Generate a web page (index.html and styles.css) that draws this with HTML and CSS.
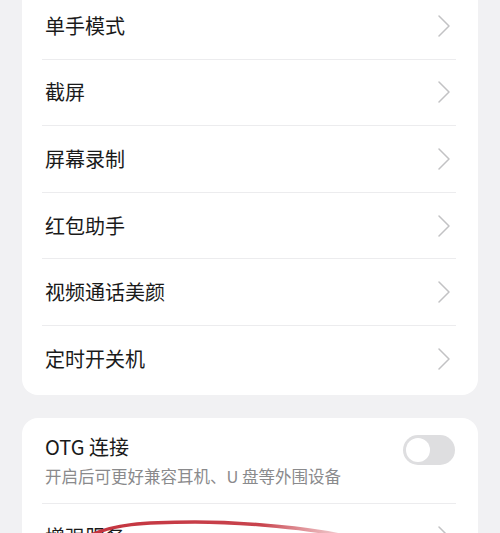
FILE: index.html
```html
<!DOCTYPE html>
<html lang="zh">
<head>
<meta charset="utf-8">
<link rel="stylesheet" href="styles.css">
</head>
<body>
<div class="page">
  <div class="card card-top">
    <div class="row"><span class="label">单手模式</span><svg class="chev" viewBox="0 0 14 22"><path d="M2 1 L12 11 L2 21"/></svg></div>
    <div class="row"><span class="label">截屏</span><svg class="chev" viewBox="0 0 14 22"><path d="M2 1 L12 11 L2 21"/></svg></div>
    <div class="row"><span class="label">屏幕录制</span><svg class="chev" viewBox="0 0 14 22"><path d="M2 1 L12 11 L2 21"/></svg></div>
    <div class="row"><span class="label">红包助手</span><svg class="chev" viewBox="0 0 14 22"><path d="M2 1 L12 11 L2 21"/></svg></div>
    <div class="row"><span class="label">视频通话美颜</span><svg class="chev" viewBox="0 0 14 22"><path d="M2 1 L12 11 L2 21"/></svg></div>
    <div class="row last"><span class="label">定时开关机</span><svg class="chev" viewBox="0 0 14 22"><path d="M2 1 L12 11 L2 21"/></svg></div>
  </div>
  <div class="card card-second">
    <div class="row row-otg">
      <div class="texts">
        <span class="label">OTG 连接</span>
        <span class="sub">开启后可更好兼容耳机、U 盘等外围设备</span>
      </div>
      <div class="toggle"><div class="knob"></div></div>
    </div>
    <div class="row last"><span class="label">增强服务</span><svg class="chev" viewBox="0 0 14 22"><path d="M2 1 L12 11 L2 21"/></svg></div>
  </div>
</div>
<svg class="scribble" viewBox="0 0 500 533" preserveAspectRatio="none">
  <defs>
    <linearGradient id="fade" x1="80" y1="0" x2="360" y2="0" gradientUnits="userSpaceOnUse">
      <stop offset="0" stop-color="#c4333e"/>
      <stop offset="0.65" stop-color="#c8434d"/>
      <stop offset="1" stop-color="#e6a2a8" stop-opacity="0.35"/>
    </linearGradient>
  </defs>
  <path d="M82 540 C108 523, 150 522, 195 522 S 315 528, 352 538" fill="none" stroke="url(#fade)" stroke-width="3.5" stroke-linecap="round"/>
</svg>
</body>
</html>
```
FILE: styles.css
```css
html, body {
  margin: 0;
  padding: 0;
  background: #f1f1f3;
  overflow: hidden;
  height: 533px;
}
body {
  font-family: "Noto Sans CJK SC", "Noto Sans", sans-serif;
  color: #1a1a1a;
  position: relative;
}
.page {
  padding: 0 22px;
}
.card {
  background: #ffffff;
  border-radius: 16px;
  padding: 0 22px 0 20px;
}
.card-top {
  margin-top: -20px;
  padding-top: 13px;
  padding-bottom: 2px;
}
.card-second {
  margin-top: 23px;
}
.row {
  height: 66.6px;
  box-sizing: border-box;
  border-bottom: 1px solid #ececee;
  display: flex;
  align-items: center;
  justify-content: space-between;
  padding-left: 3px;
}
.row.last {
  border-bottom: none;
}
.label {
  font-size: 20px;
  line-height: 28px;
  color: #1a1a1a;
}
.chev {
  width: 14px;
  height: 22px;
  margin-right: 5px;
}
.chev path {
  fill: none;
  stroke: #c2c2c4;
  stroke-width: 1.5;
  stroke-linecap: round;
  stroke-linejoin: round;
}
.row-otg {
  height: 86px;
  padding-top: 2px;
}
.texts {
  display: flex;
  flex-direction: column;
}
.sub {
  font-size: 16.5px;
  line-height: 26px;
  color: #8a8a8c;
  margin-top: 2px;
}
.toggle {
  width: 52px;
  height: 30px;
  border-radius: 15px;
  background: #dedee0;
  position: relative;
  margin-right: 1px;
  margin-top: -22px;
}
.knob {
  position: absolute;
  left: 3px;
  top: 3px;
  width: 24px;
  height: 24px;
  border-radius: 50%;
  background: #ffffff;
}
.scribble {
  position: absolute;
  left: 0;
  top: 0;
  width: 500px;
  height: 533px;
  pointer-events: none;
}
```
